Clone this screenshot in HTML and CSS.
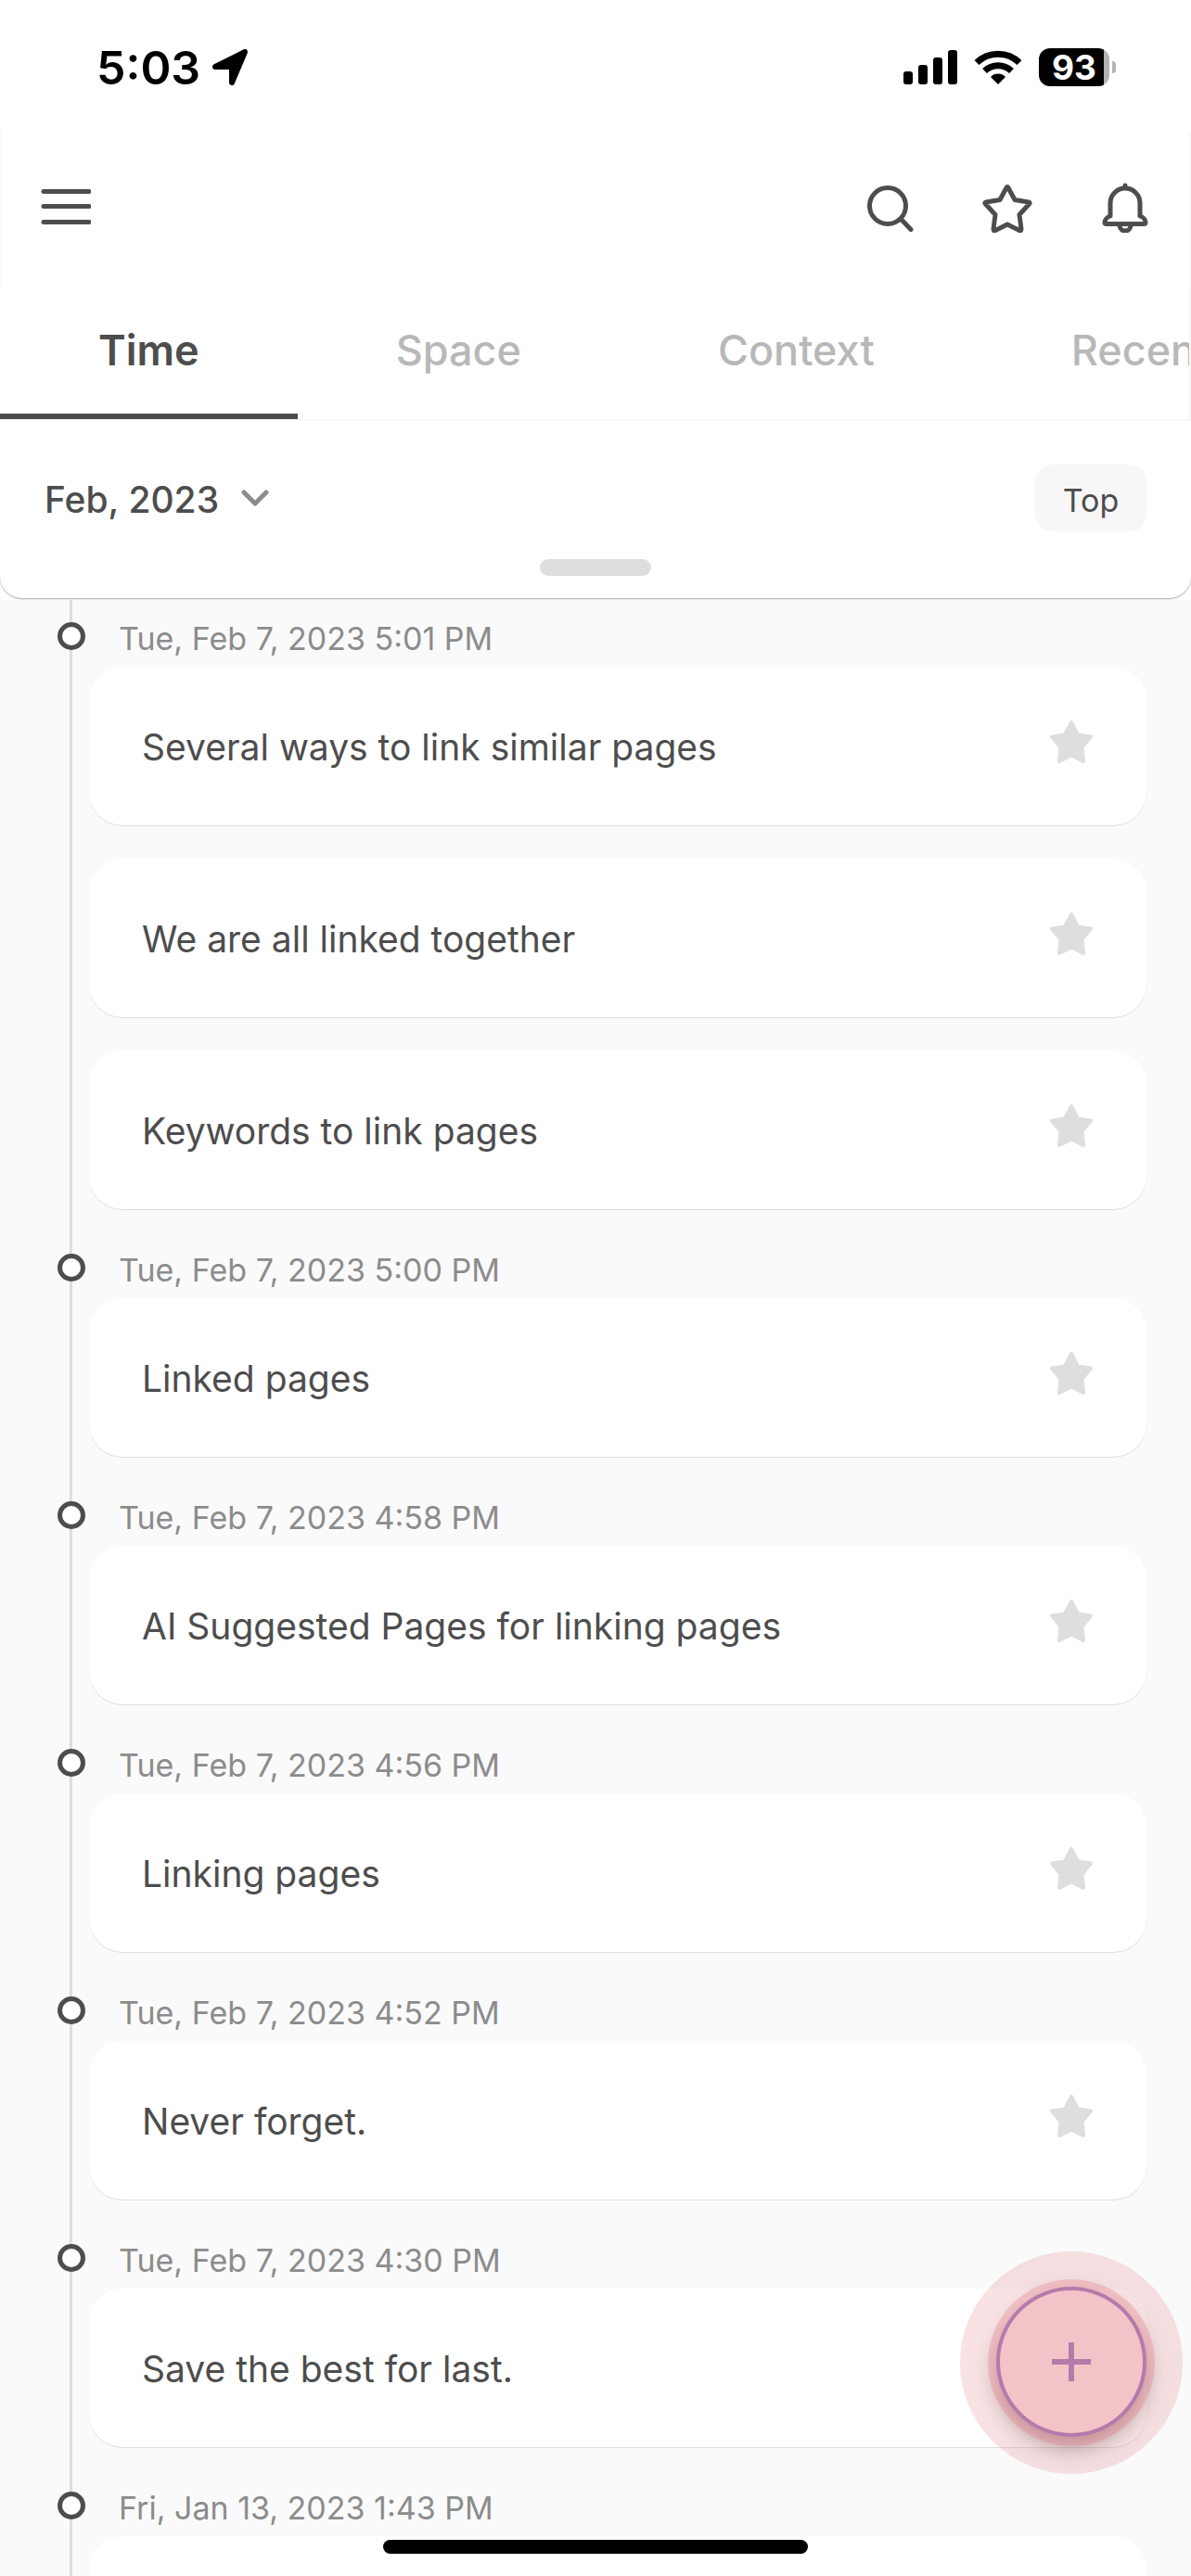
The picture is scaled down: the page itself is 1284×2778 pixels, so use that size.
FILE: index.html
```html
<!DOCTYPE html>
<html lang="en">
<head>
    <meta charset="UTF-8">
    <meta name="viewport" content="width=device-width, initial-scale=1.0">
    <title>Timeline</title>
    <link rel="stylesheet" href="styles.css">
</head>
<body>
    <svg class="sprite" aria-hidden="true">
        <symbol id="star" viewBox="0 0 46 46">
            <path d="M23 2 L30 15.500 L44 17.500 L34.500 29 L36 44 L23 37.500 L10 44 L11.500 29 L2 17.500 L16 15.500 Z" fill="currentColor" stroke="currentColor" stroke-width="4" stroke-linejoin="round"/>
        </symbol>
    </svg>
    <div class="app">
        <header class="header">
            <div class="status-bar">
                <div class="status-left">
                    <span class="clock">5:03</span>
                    <svg width="40" height="40" viewBox="0 0 40 40"><path d="M36 3 L22 36 V19 H4 Z" fill="#000" stroke="#000" stroke-width="6" stroke-linejoin="round"/></svg>
                </div>
                <div class="status-right">
                    <svg width="58" height="38" viewBox="0 0 58 38">
                        <rect x="0" y="23" width="10" height="14" rx="3"/>
                        <rect x="16" y="16" width="10" height="21" rx="3"/>
                        <rect x="32" y="8" width="10" height="29" rx="3"/>
                        <rect x="48" y="0" width="10" height="37" rx="3"/>
                    </svg>
                    <svg width="52" height="38" viewBox="0 0 52 38">
                        <path d="M3 13.500 A33 33 0 0 1 49 13.500" fill="none" stroke="#000" stroke-width="7"/>
                        <path d="M11.500 22.500 A21 21 0 0 1 40.500 22.500" fill="none" stroke="#000" stroke-width="7"/>
                        <path d="M18 29 A11 11 0 0 1 34 29 L26 37 Z"/>
                    </svg>
                    <div class="battery"><span>93</span></div>
                </div>
            </div>
            <div class="panel">
                <div class="toolbar">
                    <button class="icon-btn" aria-label="Menu">
                        <svg width="54" height="54" viewBox="0 0 54 54"><path d="M3 9.500H52M3 25.500H52M3 42.500H52"/></svg>
                    </button>
                    <div class="toolbar-actions">
                        <button class="icon-btn" aria-label="Search">
                            <svg width="54" height="54" viewBox="0 0 54 54"><circle cx="25" cy="25" r="19.500"/><path d="M39 39L50 50.500"/></svg>
                        </button>
                        <button class="icon-btn" aria-label="Favorites">
                            <svg width="54" height="54" viewBox="0 0 54 54"><path d="M26 5.500Q27 3.500 28 5.500L35 18.500L50 21Q52 21.500 50.500 23L40 34.500L42 50Q42 52.500 40 51.500L27 45L14 51.500Q12 52.500 12 50L14 34.500L3.500 23Q2 21.500 4 21L19 18.500Z"/></svg>
                        </button>
                        <button class="icon-btn" aria-label="Notifications">
                            <svg width="54" height="54" viewBox="0 0 54 54"><path d="M27 3V6M11 36V22A16 16 0 0 1 43 22V36C46 37 49 40 49 43Q49 44.500 47 44.500H7Q5 44.500 5 43C5 40 8 37 11 36Z"/><path d="M21 46A6 6 0 0 0 33 46"/></svg>
                        </button>
                    </div>
                </div>
                <nav class="tabs">
                    <a href="#" class="tab active">Time</a>
                    <a href="#" class="tab">Space</a>
                    <a href="#" class="tab">Context</a>
                    <a href="#" class="tab">Recent</a>
                </nav>
                <div class="filter">
                    <button class="month">Feb, 2023
                        <svg width="30" height="20" viewBox="0 0 30 20"><path d="M3 3L15 15L27 3" fill="none" stroke="#8c8c8c" stroke-width="5" stroke-linecap="round" stroke-linejoin="round"/></svg>
                    </button>
                    <button class="top-btn">Top</button>
                </div>
                <div class="handle"></div>
            </div>
        </header>
        <main class="timeline">
            <section class="group">
                <h2 class="date">Tue, Feb 7, 2023 5:01 PM</h2>
                <article class="card"><span>Several ways to link similar pages</span><button class="star" aria-label="Favorite"><svg><use href="#star"/></svg></button></article>
                <article class="card"><span>We are all linked together</span><button class="star" aria-label="Favorite"><svg><use href="#star"/></svg></button></article>
                <article class="card"><span>Keywords to link pages</span><button class="star" aria-label="Favorite"><svg><use href="#star"/></svg></button></article>
            </section>
            <section class="group">
                <h2 class="date">Tue, Feb 7, 2023 5:00 PM</h2>
                <article class="card"><span>Linked pages</span><button class="star" aria-label="Favorite"><svg><use href="#star"/></svg></button></article>
            </section>
            <section class="group">
                <h2 class="date">Tue, Feb 7, 2023 4:58 PM</h2>
                <article class="card"><span>AI Suggested Pages for linking pages</span><button class="star" aria-label="Favorite"><svg><use href="#star"/></svg></button></article>
            </section>
            <section class="group">
                <h2 class="date">Tue, Feb 7, 2023 4:56 PM</h2>
                <article class="card"><span>Linking pages</span><button class="star" aria-label="Favorite"><svg><use href="#star"/></svg></button></article>
            </section>
            <section class="group">
                <h2 class="date">Tue, Feb 7, 2023 4:52 PM</h2>
                <article class="card"><span>Never forget.</span><button class="star" aria-label="Favorite"><svg><use href="#star"/></svg></button></article>
            </section>
            <section class="group">
                <h2 class="date">Tue, Feb 7, 2023 4:30 PM</h2>
                <article class="card"><span>Save the best for last.</span></article>
            </section>
            <section class="group">
                <h2 class="date">Fri, Jan 13, 2023 1:43 PM</h2>
                <article class="card"></article>
            </section>
        </main>
        <button class="fab" aria-label="Add page">
            <svg width="42" height="42" viewBox="0 0 42 42"><path d="M21 0V42M0 21H42" stroke="#b57aac" stroke-width="6"/></svg>
        </button>
        <div class="home-bar"></div>
    </div>
</body>
</html>
```

FILE: styles.css
```css
*,
*::before,
*::after {
    margin: 0;
    padding: 0;
    box-sizing: border-box;
}

body {
    font-family: Inter, "Liberation Sans", sans-serif;
    color: #4d4d4d;
    background: #fafafa;
}

button {
    font: inherit;
    color: inherit;
    background: none;
    border: none;
    cursor: pointer;
}

svg {
    display: block;
}

.sprite {
    display: none;
}

.app {
    position: relative;
    height: 100vh;
    display: flex;
    flex-direction: column;
    overflow: hidden;
}

/* header */
.header {
    background: #fff;
    flex-shrink: 0;
    padding-bottom: 2px;
}

.status-bar {
    height: 141px;
    padding: 4px 82px 0 104px;
    display: flex;
    justify-content: space-between;
    align-items: center;
    color: #000;
}

.status-left {
    display: flex;
    align-items: center;
    gap: 12px;
}

.clock {
    font-size: 50px;
    font-weight: 600;
}

.status-right {
    display: flex;
    align-items: center;
    gap: 18px;
}

.battery {
    position: relative;
    width: 76px;
    height: 41px;
    border-radius: 12px;
    background: linear-gradient(to right, #000 70px, #b3b3b3 70px);
    color: #fff;
    font-size: 37px;
    font-weight: 700;
    line-height: 41px;
    text-align: center;
    margin-right: 6px;
}

.battery::after {
    content: "";
    position: absolute;
    right: -7px;
    top: 14px;
    width: 4px;
    height: 13px;
    border-radius: 0 4px 4px 0;
    background: #b3b3b3;
}

.panel {
    padding-bottom: 24px;
    border-radius: 0 0 24px 24px;
    box-shadow: 0 1px 2px rgba(0, 0, 0, 0.35);
    clip-path: inset(0 0 -4px 0);
}

.toolbar {
    height: 169px;
    padding: 0 42px 4px;
    display: flex;
    justify-content: space-between;
    align-items: center;
    border: 2px solid #f9f9f9;
    border-width: 0 2px;
}

.icon-btn svg {
    fill: none;
    stroke: #4d4d4d;
    stroke-width: 5;
    stroke-linecap: round;
    stroke-linejoin: round;
}

.toolbar-actions {
    display: flex;
    gap: 73px;
}

.tabs {
    display: flex;
    height: 144px;
    overflow: hidden;
    border: 2px solid #f7f7f7;
    border-width: 0 2px 2px 0;
}

.tab {
    flex-shrink: 0;
    padding: 0 106px;
    line-height: 136px;
    font-size: 45px;
    font-weight: 500;
    color: #b8b8b8;
    text-decoration: none;
}

.tab.active {
    color: #4d4d4d;
    font-weight: 600;
    border-bottom: 6px solid #4d4d4d;
}

.filter {
    display: flex;
    justify-content: space-between;
    align-items: center;
    padding: 47px 48px 30px;
}

.month {
    display: flex;
    align-items: center;
    gap: 24px;
    padding-top: 2px;
    font-size: 39px;
    font-weight: 500;
}

.top-btn {
    width: 120px;
    height: 72px;
    border-radius: 18px;
    background: #f7f7f7;
    font-size: 34px;
    padding-top: 4px;
}

.handle {
    width: 120px;
    height: 18px;
    margin: 0 auto;
    border-radius: 9px;
    background: #dedede;
}

/* timeline */
.timeline {
    flex: 1;
    min-height: 0;
    overflow-y: auto;
    scrollbar-width: none;
    padding: 0 48px 0 75px;
}

.group {
    padding: 12px 0 24px 18px;
    border-left: 3px solid #dedede;
    display: flex;
    flex-direction: column;
}

.date {
    position: relative;
    height: 60px;
    padding-left: 32px;
    line-height: 60px;
    font-size: 34px;
    font-weight: 400;
    color: #8c8c8c;
}

.date::before {
    content: "";
    position: absolute;
    left: -34px;
    top: 12px;
    width: 30px;
    height: 30px;
    border: 5px solid #4d4d4d;
    border-radius: 50%;
    background: #fff;
}

.card {
    height: 171px;
    padding: 2px 58px 0 57px;
    display: flex;
    justify-content: space-between;
    align-items: center;
    border-radius: 36px;
    background: #fff;
    box-shadow: 0 1px 0 #dedede;
    font-size: 39px;
}

.card + .card {
    margin-top: 36px;
}

.star {
    color: #dedede;
    padding-bottom: 12px;
}

.star svg {
    width: 46px;
    height: 46px;
}

/* floating button */
.fab {
    position: absolute;
    right: 48px;
    bottom: 150px;
    width: 162px;
    height: 162px;
    display: flex;
    justify-content: center;
    align-items: center;
    border: 4px solid #b57aac;
    border-radius: 50%;
    background: #f3c4c7;
    box-shadow: 0 1px 0 9px rgba(230, 120, 130, 0.3), 0 1px 0 39px rgba(230, 130, 140, 0.23), 0 12px 24px rgba(0, 0, 0, 0.35);
}

.home-bar {
    position: absolute;
    left: 50%;
    bottom: 24px;
    width: 458px;
    height: 15px;
    margin-left: -229px;
    border-radius: 8px;
    background: #000;
}
```
